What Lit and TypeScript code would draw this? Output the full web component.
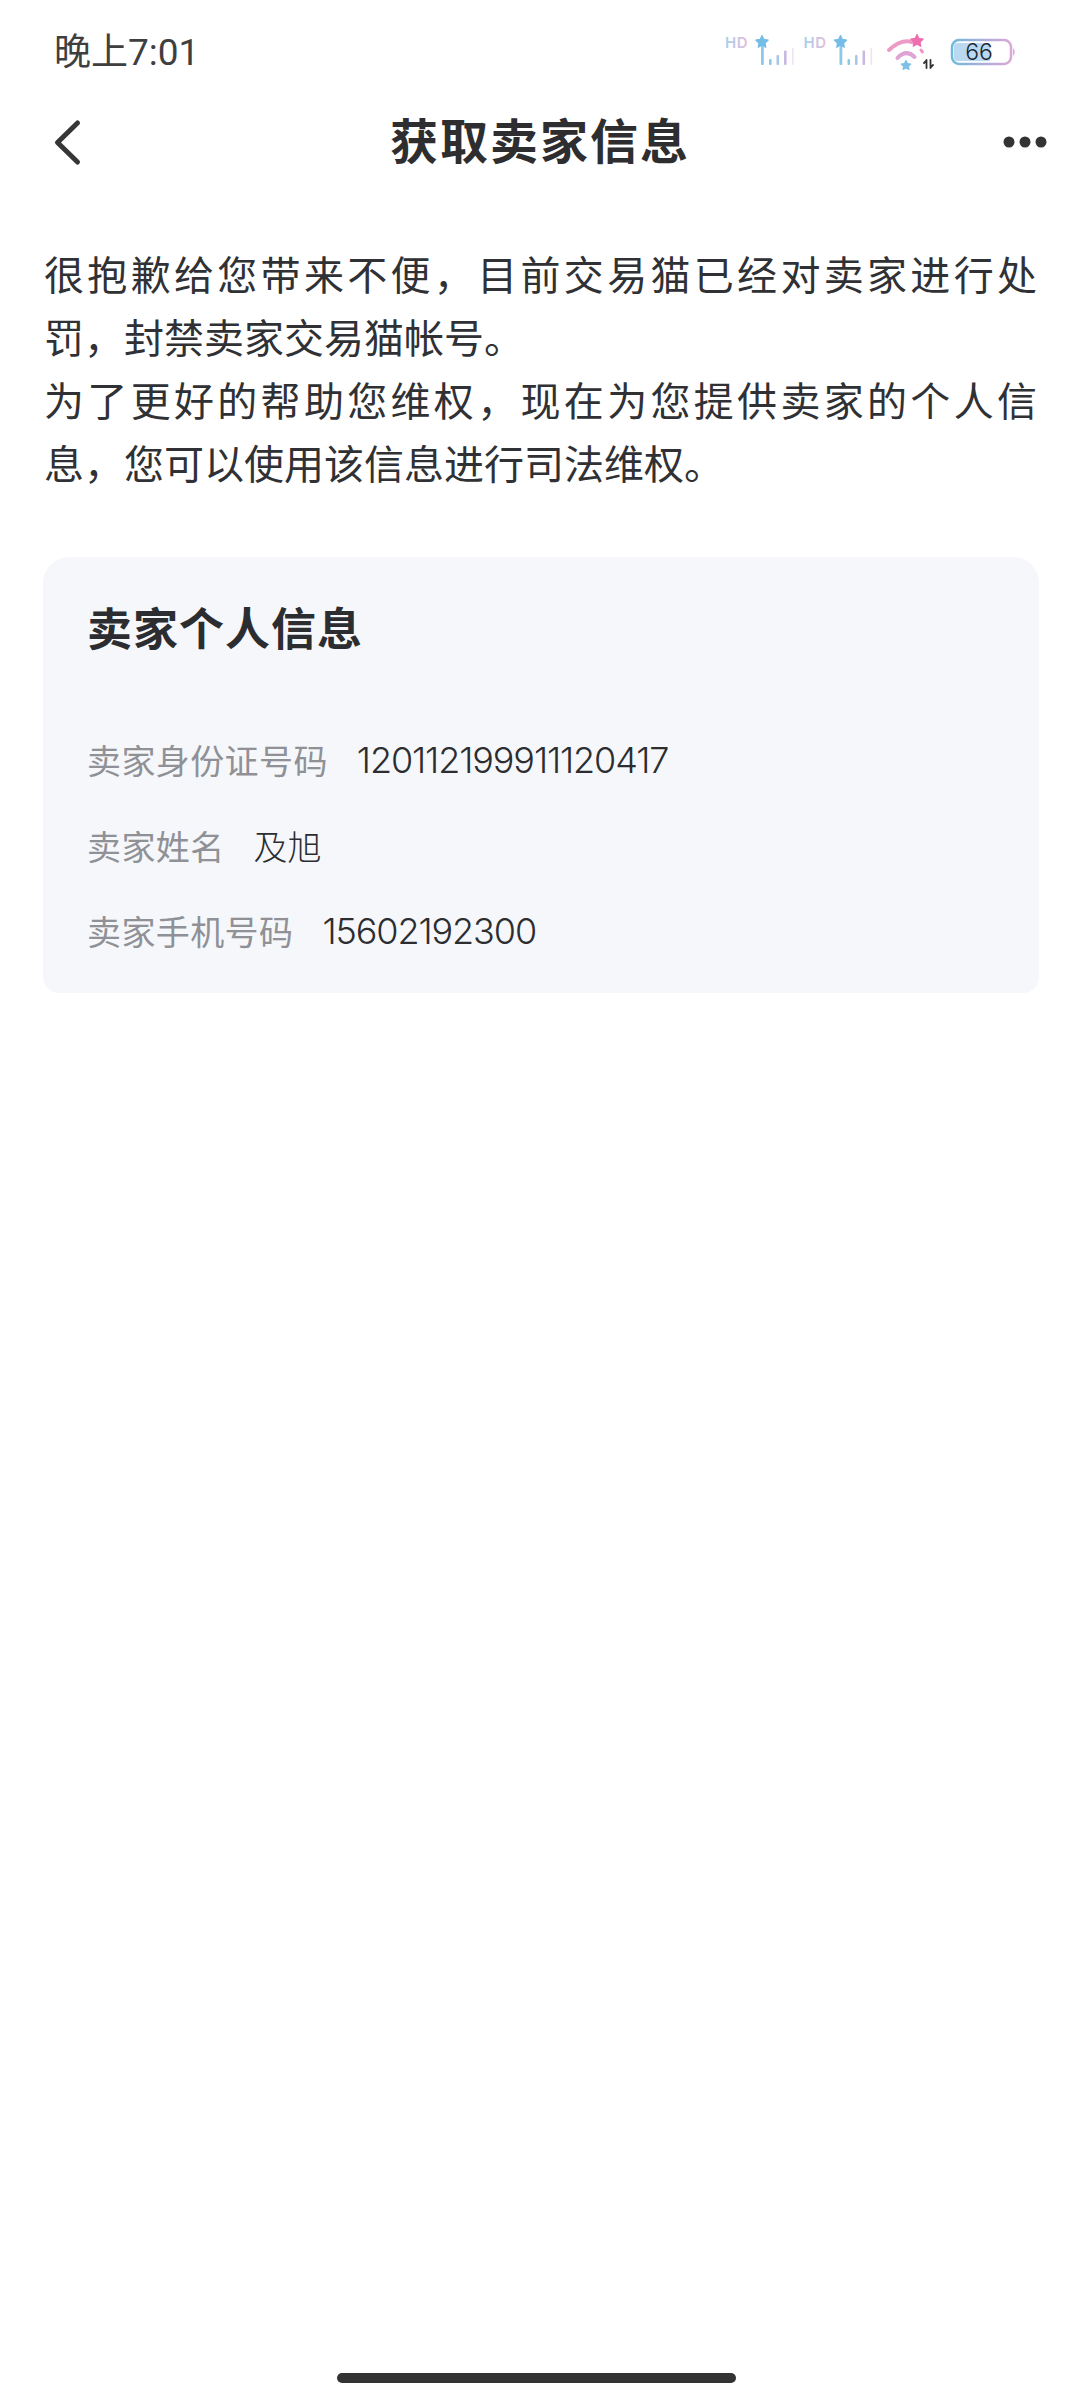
import { LitElement, html, css, svg } from "lit";
import { customElement } from "lit/decorators.js";

const star = (cx: number, cy: number, r: number, fill: string) => {
  const pts: string[] = [];
  for (let i = 0; i < 10; i++) {
    const a = -Math.PI / 2 + (i * Math.PI) / 5;
    const q = i % 2 ? r * 0.5 : r;
    pts.push(`${(cx + q * Math.cos(a)).toFixed(1)},${(cy + q * Math.sin(a)).toFixed(1)}`);
  }
  return svg`<polygon points=${pts.join(" ")} fill=${fill} stroke=${fill} stroke-width="1.2" stroke-linejoin="round"></polygon>`;
};

const signal = (dx: number) => svg`
  <g transform="translate(${dx} 0)">
    <text x="25" y="28" class="hd" fill="url(#hd)">HD</text>
    ${star(62, 22, 6.5, "#74bde6")}
    <rect x="61" y="26" width="2.8" height="19" rx="1" fill="#8cc8ea"></rect>
    <rect x="69" y="39" width="2.6" height="6" rx="1" fill="#8cc8ea"></rect>
    <rect x="76.5" y="35" width="2.6" height="10" rx="1" fill="#a9c6e6"></rect>
    <rect x="84" y="30.5" width="2.6" height="14.5" rx="1" fill="#c8b8e2"></rect>
    <rect x="92" y="28" width="1.6" height="17" rx="0.8" fill="#eee4f2"></rect>
  </g>`;

@customElement("app-root")
export class AppRoot extends LitElement {
  static styles = css`
    :host {
      display: flex;
      flex-direction: column;
      min-height: 2400px;
      background: #fff;
      font-family: "Noto Sans CJK SC", "Noto Sans", sans-serif;
      color: #2e2f33;
    }
    .status {
      height: 64px;
      padding: 20px 40px 0 54px;
      display: flex;
      justify-content: space-between;
      align-items: flex-start;
    }
    .time {
      font-family: "Roboto", "Noto Sans CJK SC", sans-serif;
      font-size: 37px;
      line-height: 64px;
      margin-top: 1px;
      color: #3f3f3f;
    }
    .icons {
      width: 340px;
      height: 60px;
    }
    .hd {
      font: 600 15px "Inter", sans-serif;
      letter-spacing: 0.5px;
    }
    .batt {
      font: 300 23px "Inter", sans-serif;
    }
    .nav {
      height: 112px;
      padding: 2px 32px 0 52px;
      display: flex;
      justify-content: space-between;
      align-items: center;
    }
    .back {
      width: 30px;
      height: 48px;
      display: block;
    }
    .title {
      font-size: 48px;
      font-weight: 700;
      letter-spacing: 2px;
      line-height: 64px;
      color: #2e2e30;
      margin: -8px 0 0 -4px;
    }
    .more {
      width: 46px;
      height: 14px;
      display: block;
    }
    .intro {
      margin: 44px 43px 0 44px;
      font-size: 40px;
      line-height: 63px;
      text-align: justify;
      text-justify: inter-character;
      color: #303135;
    }
    .intro p {
      margin: 0;
    }
    .card {
      margin: 63px 41px 0 43px;
      height: 436px;
      box-sizing: border-box;
      background: #f6f7fb;
      border-radius: 26px 26px 16px 16px;
      padding: 40px 44px 0;
    }
    .card h2 {
      margin: 0 0 60px;
      font-size: 45px;
      line-height: 60px;
      font-weight: 700;
      letter-spacing: 1px;
      color: #2c2d30;
    }
    .row {
      display: flex;
      gap: 29px;
      height: 85.5px;
      align-items: center;
      font-size: 34px;
    }
    .label {
      color: #8f9196;
      letter-spacing: 0.4px;
    }
    .value {
      font-family: "Inter", "Noto Sans CJK SC", sans-serif;
      font-size: 36px;
      font-weight: 300;
      color: #2c2d30;
      letter-spacing: -1.1px;
    }
    .name {
      color: #2c2d30;
      font-weight: 300;
    }
    .home {
      margin: auto 0 17px 337px;
      width: 399px;
      height: 10px;
      border-radius: 5px;
      background: #333;
    }
  `;

  render() {
    return html`
      <div class="status">
        <span class="time">晚上7:01</span>
        <svg class="icons" viewBox="0 0 340 60">
          <defs>
            <linearGradient id="hd" x1="0" x2="1">
              <stop offset="0" stop-color="#a4d0ec"></stop>
              <stop offset="1" stop-color="#e6bcdc"></stop>
            </linearGradient>
            <linearGradient id="bat" x1="0" x2="1">
              <stop offset="0" stop-color="#70b8dc"></stop>
              <stop offset="1" stop-color="#dba8d8"></stop>
            </linearGradient>
          </defs>
          ${signal(0)} ${signal(78.5)}
          <path d="M189 30 Q201 19 212 22" fill="none" stroke="#ee9ac6" stroke-width="4" stroke-linecap="round"></path>
          <path d="M197.5 38 Q206 29 214.5 37" fill="none" stroke="#dfa3d4" stroke-width="4" stroke-linecap="round"></path>
          ${star(206, 45.5, 5, "#7fc0e6")}
          ${star(217, 21, 6.5, "#ee6fb0")}
          <path d="M221 30l1.5 2" stroke="#ef9ac6" stroke-width="3" stroke-linecap="round"></path>
          <path d="M226.5 40v8M226 41l-2 2M230.5 48v-8M231 47l2-2" stroke="#333" stroke-width="1.8" stroke-linecap="round" fill="none"></path>
          <rect x="252" y="20" width="59" height="24" rx="7" fill="#fff" stroke="url(#bat)" stroke-width="2.5"></rect>
          <path d="M257 23h33v18h-33a3 3 0 0 1-3-3v-12a3 3 0 0 1 3-3z" fill="#b8d9f0"></path>
          <path d="M313 28q3.5 4 0 8z" fill="#dba8d8"></path>
          <text x="279" y="40" text-anchor="middle" class="batt" fill="#1d2430">66</text>
        </svg>
      </div>
      <div class="nav">
        <svg class="back" viewBox="0 0 30 48">
          <path d="M25.5 5 L5.5 24.5 L25.5 44" fill="none" stroke="#363636" stroke-width="5" stroke-linecap="round" stroke-linejoin="round"></path>
        </svg>
        <div class="title">获取卖家信息</div>
        <svg class="more" viewBox="0 0 46 14">
          <circle cx="7" cy="7" r="5.5" fill="#333"></circle>
          <circle cx="23" cy="7" r="5.5" fill="#333"></circle>
          <circle cx="39" cy="7" r="5.5" fill="#333"></circle>
        </svg>
      </div>
      <div class="intro">
        <p>很抱歉给您带来不便，目前交易猫已经对卖家进行处罚，封禁卖家交易猫帐号。</p>
        <p>为了更好的帮助您维权，现在为您提供卖家的个人信息，您可以使用该信息进行司法维权。</p>
      </div>
      <div class="card">
        <h2>卖家个人信息</h2>
        <div class="row"><span class="label">卖家身份证号码</span><span class="value">120112199911120417</span></div>
        <div class="row"><span class="label">卖家姓名</span><span class="name">及旭</span></div>
        <div class="row"><span class="label">卖家手机号码</span><span class="value">15602192300</span></div>
      </div>
      <div class="home"></div>
    `;
  }
}
